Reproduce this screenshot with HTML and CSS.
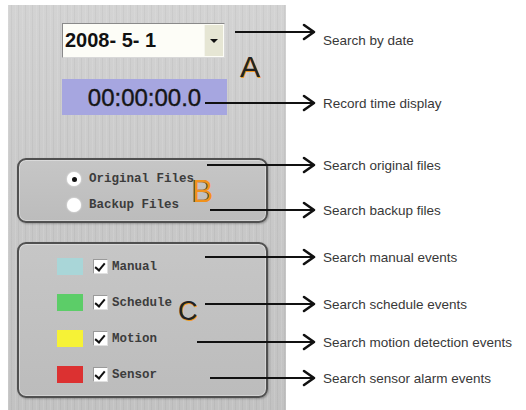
FILE: index.html
```html
<!DOCTYPE html>
<html lang="en">
<head>
    <meta charset="UTF-8">
    <title>Record search panel</title>
    <link rel="stylesheet" href="styles.css">
</head>
<body>
    <div class="figure">
        <div class="panel">
            <div class="date-select">
                <span class="date-value">2008- 5- 1</span>
                <span class="drop-btn"><span class="tri"></span></span>
            </div>
            <div class="time-display">00:00:00.0</div>

            <div class="group group-b">
                <div class="opt"><span class="radio checked"></span>Original Files</div>
                <div class="opt"><span class="radio"></span>Backup Files</div>
            </div>

            <div class="group group-c">
                <div class="ev"><span class="swatch manual"></span><span class="check"></span>Manual</div>
                <div class="ev"><span class="swatch schedule"></span><span class="check"></span>Schedule</div>
                <div class="ev"><span class="swatch motion"></span><span class="check"></span>Motion</div>
                <div class="ev"><span class="swatch sensor"></span><span class="check"></span>Sensor</div>
            </div>

            <span class="tag tag-a">A</span>
            <span class="tag tag-b">B</span>
            <span class="tag tag-c">C</span>
        </div>

        <div class="notes">
            <div class="note n-date">
                <div class="arrow-slot"><div class="arrow"><span class="shaft"></span><svg class="head" width="14" height="18" viewBox="0 0 14 18"><polyline points="2,2 12,9 2,16" /></svg></div></div>
                <span class="label low">Search by date</span>
            </div>
            <div class="note n-time">
                <div class="arrow-slot"><div class="arrow"><span class="shaft"></span><svg class="head" width="14" height="18" viewBox="0 0 14 18"><polyline points="2,2 12,9 2,16" /></svg></div></div>
                <span class="label">Record time display</span>
            </div>
            <div class="note n-orig">
                <div class="arrow-slot"><div class="arrow"><span class="shaft"></span><svg class="head" width="14" height="18" viewBox="0 0 14 18"><polyline points="2,2 12,9 2,16" /></svg></div></div>
                <span class="label">Search original files</span>
            </div>
            <div class="note n-backup">
                <div class="arrow-slot"><div class="arrow"><span class="shaft"></span><svg class="head" width="14" height="18" viewBox="0 0 14 18"><polyline points="2,2 12,9 2,16" /></svg></div></div>
                <span class="label">Search backup files</span>
            </div>
            <div class="note n-manual">
                <div class="arrow-slot"><div class="arrow"><span class="shaft"></span><svg class="head" width="14" height="18" viewBox="0 0 14 18"><polyline points="2,2 12,9 2,16" /></svg></div></div>
                <span class="label">Search manual events</span>
            </div>
            <div class="note n-schedule">
                <div class="arrow-slot"><div class="arrow"><span class="shaft"></span><svg class="head" width="14" height="18" viewBox="0 0 14 18"><polyline points="2,2 12,9 2,16" /></svg></div></div>
                <span class="label">Search schedule events</span>
            </div>
            <div class="note n-motion">
                <div class="arrow-slot"><div class="arrow"><span class="shaft"></span><svg class="head" width="14" height="18" viewBox="0 0 14 18"><polyline points="2,2 12,9 2,16" /></svg></div></div>
                <span class="label">Search motion detection events</span>
            </div>
            <div class="note n-sensor">
                <div class="arrow-slot"><div class="arrow"><span class="shaft"></span><svg class="head" width="14" height="18" viewBox="0 0 14 18"><polyline points="2,2 12,9 2,16" /></svg></div></div>
                <span class="label">Search sensor alarm events</span>
            </div>
        </div>
    </div>
</body>
</html>
```

FILE: styles.css
```css
body {
    margin: 0;
    background: #fff;
    font-family: "Liberation Sans", Arial, sans-serif;
    overflow: hidden;
}
.figure {
    display: flex;
    width: 526px;
    height: 410px;
}

/* grey software panel */
.panel {
    position: relative;
    flex: none;
    width: 278px;
    height: 405px;
    margin: 5px 0 0 8px;
    padding: 18px 0 0 0;
    box-sizing: border-box;
    background:
        repeating-linear-gradient(90deg, rgba(255,255,255,0.10) 0 1px, rgba(0,0,0,0) 1px 3px, rgba(0,0,0,0.04) 3px 4px, rgba(0,0,0,0) 4px 7px),
        linear-gradient(#d3d3d3, #c9c9c9 45%, #c2c2c2);
}
.date-select {
    display: flex;
    width: 163px;
    height: 35px;
    margin-left: 54px;
    box-sizing: border-box;
    border: 1px solid #8a8a8a;
    border-right-color: #d8d8d8;
    border-bottom-color: #d8d8d8;
    background: #fdfdf7;
}
.date-value {
    flex: 1;
    padding-left: 2px;
    font-weight: bold;
    font-size: 20px;
    line-height: 33px;
    color: #111;
}
.drop-btn {
    display: flex;
    align-items: center;
    justify-content: center;
    width: 18px;
    margin: 1px;
    background: #e6e6d4;
    border-left: 1px solid #f4f4ec;
}
.tri {
    width: 0;
    height: 0;
    border-left: 4px solid transparent;
    border-right: 4px solid transparent;
    border-top: 4px solid #111;
}
.time-display {
    width: 165px;
    height: 36px;
    margin: 21px 0 0 54px;
    background: #a6a6e0;
    text-align: center;
    font-size: 24px;
    line-height: 37px;
    color: #161616;
    -webkit-text-stroke: 0.4px #161616;
}

.group {
    margin-left: 9px;
    width: 251px;
    box-sizing: border-box;
    border: 2px solid #505050;
    border-radius: 9px;
    background: linear-gradient(#c6c6c6, #bcbcbc);
    box-shadow: inset 0 0 0 1px rgba(255,255,255,0.35), 1px 1px 2px rgba(0,0,0,0.25);
    font-family: "Liberation Mono", "Courier New", monospace;
    font-weight: bold;
    font-size: 12.5px;
    color: #3c3c3c;
}
.group-b {
    height: 65px;
    margin-top: 43px;
    padding: 11px 0 0 48px;
    display: flex;
    flex-direction: column;
    gap: 10px;
}
.opt {
    display: flex;
    align-items: center;
    gap: 8px;
    height: 16px;
}
.radio {
    width: 14px;
    height: 14px;
    border-radius: 50%;
    background: #fff;
    box-shadow: 0 0 2px rgba(255,255,255,0.9);
    display: flex;
    align-items: center;
    justify-content: center;
}
.radio.checked::after {
    content: "";
    width: 5px;
    height: 5px;
    border-radius: 50%;
    background: #111;
}
.group-c {
    height: 156px;
    margin-top: 19px;
    padding: 14px 0 0 38px;
    display: flex;
    flex-direction: column;
    gap: 19px;
}
.ev {
    display: flex;
    align-items: center;
    height: 17px;
}
.swatch {
    width: 26px;
    height: 17px;
    margin-right: 10px;
}
.manual { background: #a9d6d8; }
.schedule { background: #5ccd68; }
.motion { background: #f6f236; }
.sensor { background: #dc3131; }
.check {
    position: relative;
    width: 15px;
    height: 15px;
    margin-right: 4px;
    box-sizing: border-box;
    background: #fff;
    border: 1px solid #9a9a9a;
    border-right-color: #e0e0e0;
    border-bottom-color: #e0e0e0;
}
.check::after {
    content: "";
    position: absolute;
    left: 3px;
    top: 1px;
    width: 4px;
    height: 8px;
    border: solid #111;
    border-width: 0 2px 2px 0;
    transform: rotate(40deg);
}

/* section letters over the panel */
.tag {
    position: absolute;
    font-family: "Liberation Sans", Arial, sans-serif;
    line-height: 1;
}
.tag-a {
    left: 232px;
    top: 47px;
    font-size: 30px;
    color: #222;
    text-shadow: 1px 1px 0 #f29a22;
}
.tag-b {
    left: 184px;
    top: 170px;
    font-size: 32px;
    color: #f0921c;
    text-shadow: -1px 0 0 #3a3a3a;
}
.tag-c {
    left: 170px;
    top: 293px;
    font-size: 27px;
    color: #222;
    text-shadow: 1px 1px 0 #f29a22;
}

/* callouts, drawn over the panel */
.notes {
    position: relative;
    z-index: 1;
    flex: none;
    width: 330px;
    margin-left: -90px;
    display: flex;
    flex-direction: column;
}
.note {
    display: flex;
    align-items: center;
    height: 20px;
}
.arrow-slot {
    flex: none;
    width: 120px;
    display: flex;
    justify-content: flex-end;
}
.arrow {
    display: flex;
    align-items: center;
}
.shaft {
    flex: 1;
    height: 2.5px;
    margin-right: -12px;
    background: #111;
}
.head polyline {
    fill: none;
    stroke: #111;
    stroke-width: 2.6;
    stroke-linecap: round;
    stroke-linejoin: round;
}
.label {
    margin-left: 7px;
    font-size: 13.5px;
    color: #383838;
    white-space: nowrap;
}
.label.low { padding-top: 16px; }

.n-date { margin-top: 22px; }
.n-date .arrow { width: 81px; }
.n-time { margin-top: 51px; }
.n-time .arrow { width: 111px; }
.n-orig { margin-top: 42px; }
.n-orig .arrow { width: 109px; }
.n-backup { margin-top: 25px; }
.n-backup .arrow { width: 106px; }
.n-manual { margin-top: 27px; }
.n-manual .arrow { width: 111px; }
.n-schedule { margin-top: 27px; }
.n-schedule .arrow { width: 111px; }
.n-motion { margin-top: 18px; }
.n-motion .arrow { width: 119px; }
.n-sensor { margin-top: 16px; }
.n-sensor .arrow { width: 106px; }
```
